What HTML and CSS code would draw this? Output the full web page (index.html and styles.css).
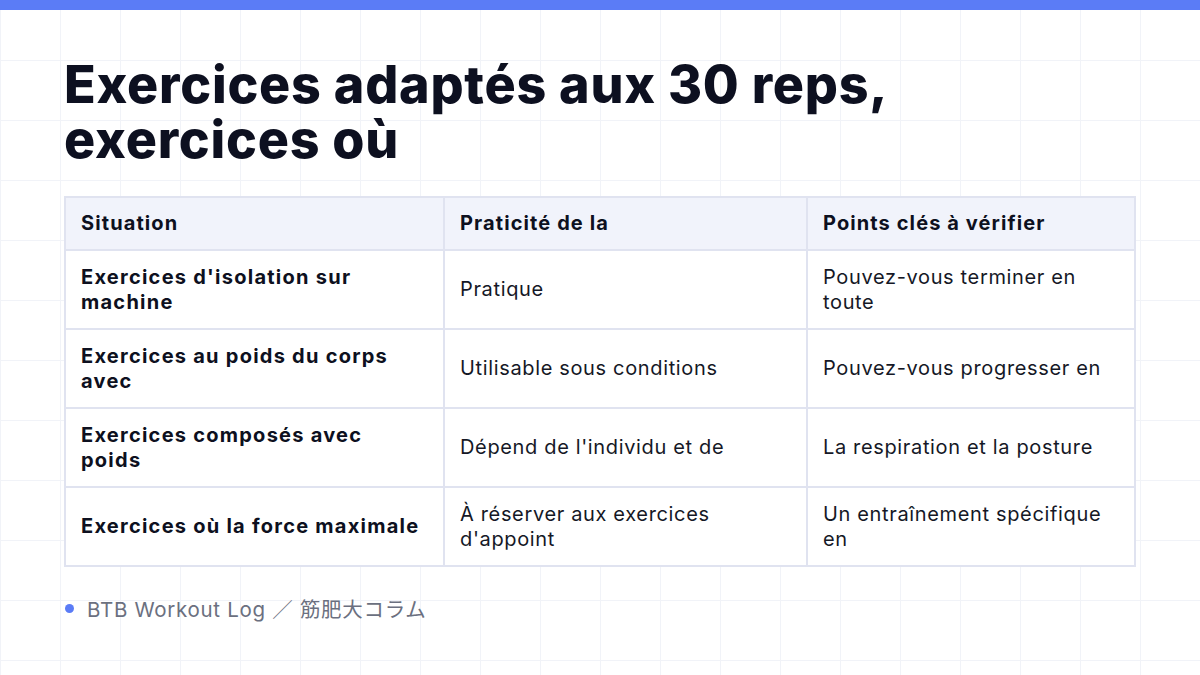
FILE: index.html
```html
<!DOCTYPE html>
<html lang="fr">
<head>
<meta charset="utf-8">
<link rel="stylesheet" href="styles.css">
</head>
<body>
<div class="topbar"></div>
<main class="slide">
  <h1 class="title">Exercices adaptés aux 30 reps,<br>exercices où</h1>
  <table class="grid-table">
    <colgroup>
      <col class="c1"><col class="c2"><col class="c3">
    </colgroup>
    <thead>
      <tr><th>Situation</th><th>Praticité de la</th><th>Points clés à vérifier</th></tr>
    </thead>
    <tbody>
      <tr><td class="lead">Exercices d'isolation sur machine</td><td>Pratique</td><td>Pouvez-vous terminer en toute</td></tr>
      <tr><td class="lead">Exercices au poids du corps avec</td><td>Utilisable sous conditions</td><td>Pouvez-vous progresser en</td></tr>
      <tr><td class="lead">Exercices composés avec poids</td><td>Dépend de l'individu et de</td><td>La respiration et la posture</td></tr>
      <tr><td class="lead">Exercices où la force maximale</td><td>À réserver aux exercices d'appoint</td><td>Un entraînement spécifique en</td></tr>
    </tbody>
  </table>
  <footer class="footer"><span class="dot"></span><span class="src">BTB Workout Log ／ 筋肥大コラム</span></footer>
</main>
</body>
</html>
```
FILE: styles.css
```css
* { box-sizing: border-box; }
html, body { margin: 0; padding: 0; }
body {
  width: 1200px;
  height: 675px;
  overflow: hidden;
  background-color: #ffffff;
  background-image:
    linear-gradient(to right, #f1f3f8 1px, transparent 1px),
    linear-gradient(to bottom, #f1f3f8 1px, transparent 1px);
  background-size: 60px 60px;
  background-position: 0 0;
  font-family: Inter, "Noto Sans CJK JP", sans-serif;
  color: #0f1222;
}
.topbar { height: 10px; background: #5b7cf6; }
.slide { padding: 47px 64px 0 64px; }
.title {
  margin: 0;
  font-size: 52px;
  font-weight: 800;
  line-height: 55px;
  letter-spacing: 0.75px;
  color: #0d1020;
}
.grid-table {
  margin-top: 29px;
  width: 1070px;
  border-collapse: collapse;
  table-layout: fixed;
  background: #ffffff;
  font-size: 20px;
  line-height: 25px;
}
.c1 { width: 379px; }
.c2 { width: 363px; }
.c3 { width: 328px; }
.grid-table th, .grid-table td {
  border: 2px solid #e0e3f0;
  padding: 0 15px;
  text-align: left;
  vertical-align: middle;
}
.grid-table th {
  height: 53px;
  background: #f1f3fb;
  font-weight: 700;
  letter-spacing: 1.1px;
  color: #0d1020;
}
.grid-table td {
  height: 79px;
  font-weight: 400;
  letter-spacing: 0.65px;
  color: #151826;
}
.grid-table td.lead { font-weight: 700; letter-spacing: 1.25px; color: #0d1020; }
.footer {
  margin-top: 26px;
  display: flex;
  align-items: center;
  gap: 13px;
  font-size: 20.5px;
  letter-spacing: 0.7px;
  color: #6b7080;
}
.dot {
  width: 9px; height: 9px; border-radius: 50%;
  background: #5b7cf6;
  display: inline-block;
  margin-left: 1px;
}
```
